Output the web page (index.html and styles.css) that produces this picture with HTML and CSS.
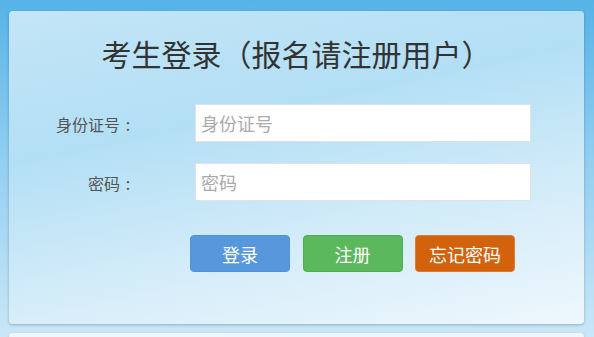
FILE: index.html
```html
<!DOCTYPE html>
<html>
<head>
  <meta charset="utf-8">
  <title>考生登录</title>
  <link rel="stylesheet" href="styles.css">
</head>
<body>
  <div class="login-box">
    <h1 class="login-title">考生登录（报名请注册用户）</h1>
    <form class="login-form">
      <div class="row">
        <label for="sfzh">身份证号<span class="colon">:</span></label>
        <input type="text" id="sfzh" placeholder="身份证号">
      </div>
      <div class="row">
        <label for="mm">密码<span class="colon">:</span></label>
        <input type="password" id="mm" placeholder="密码">
      </div>
      <div class="btns">
        <button type="button" class="btn btn-login">登录</button>
        <button type="button" class="btn btn-reg">注册</button>
        <button type="button" class="btn btn-forget">忘记密码</button>
      </div>
    </form>
  </div>
  <div class="next-box"></div>
</body>
</html>
```

FILE: styles.css
```css
html, body {
  overflow: hidden;
}
body {
  margin: 0;
  height: 337px;
  font-family: "Noto Sans CJK SC", "Noto Sans", sans-serif;
  background: linear-gradient(to bottom, #55b3e7 0%, #8fcdf0 45%, #c9e7f7 100%);
}
.login-box {
  margin: 11px 10px 0 9px;
  height: 313px;
  box-sizing: border-box;
  padding-top: 22px;
  border-radius: 4px;
  background: linear-gradient(168deg, #c4e5f7 0%, #b3dff5 35%, #d6edf9 70%, #eef7fd 100%);
  box-shadow: 0 1px 3px rgba(0, 0, 0, 0.25);
}
.login-title {
  margin: 0 0 31px;
  font-size: 30px;
  font-weight: normal;
  line-height: 40px;
  color: #333;
  text-align: center;
}
.row {
  display: flex;
  align-items: center;
  margin-bottom: 21px;
}
.row label {
  width: 127px;
  text-align: right;
  font-size: 16px;
  color: #555;
  margin-top: 2px;
}
.colon {
  display: inline-block;
  width: 16px;
  text-align: center;
}
.row input {
  margin-left: 59px;
  width: 336px;
  height: 38px;
  box-sizing: border-box;
  border: 1px solid #dde3e8;
  background: #fff;
  padding: 0 5px;
  font-family: inherit;
  font-size: 18px;
  color: #333;
  outline: none;
}
.row input::placeholder {
  color: #aaa;
}
.btns {
  display: flex;
  padding-left: 181px;
  margin-top: 34px;
}
.btn {
  width: 100px;
  height: 37px;
  margin-right: 12.5px;
  border: 1px solid transparent;
  border-radius: 4px;
  color: #fff;
  font-family: inherit;
  font-size: 18px;
  cursor: pointer;
}
.btn-login {
  background: #5797dc;
  border-color: #5292d8;
}
.btn-reg {
  background: #5cb85c;
  border-color: #4cae4c;
}
.btn-forget {
  background: #d2620c;
  border-color: #e07a30;
}
.next-box {
  margin: 9px 10px 0 9px;
  height: 6px;
  border-radius: 4px 4px 0 0;
  background: #eef7fd;
  box-shadow: 0 1px 3px rgba(0, 0, 0, 0.2);
}
```
